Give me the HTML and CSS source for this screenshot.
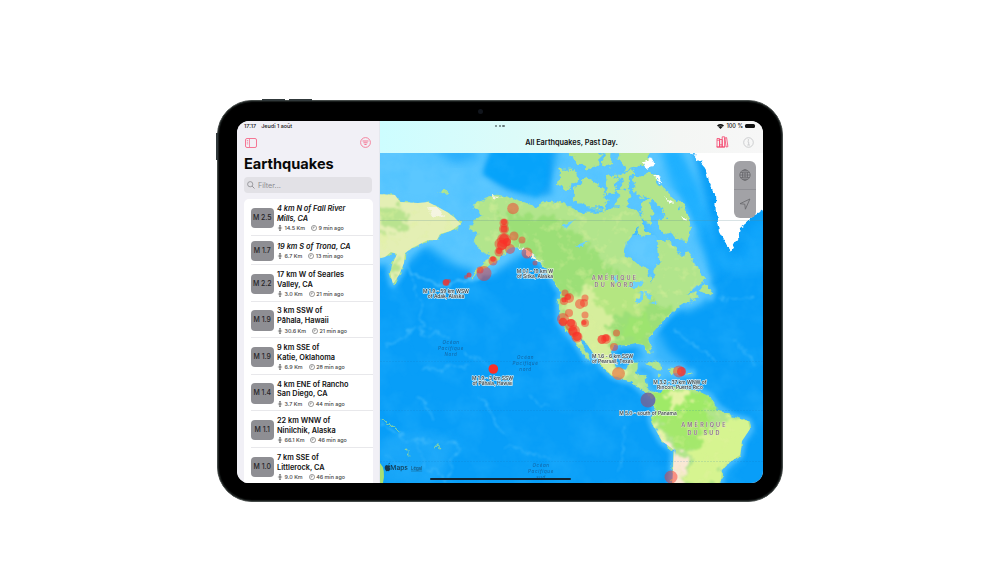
FILE: index.html
```html
<!DOCTYPE html>
<html lang="fr">
<head>
<meta charset="utf-8">
<title>Earthquakes</title>
<link rel="stylesheet" href="styles.css">
</head>
<body>
<svg class="defs" width="0" height="0">
  <symbol id="depth" viewBox="0 0 12 14"><path d="M6 0v14M3.500 2.500L6 .5l2.500 2M3.500 11.500L6 13.500l2.500-2M1 7h10M3.500 5h5M3.500 9h5" fill="none" stroke="currentColor" stroke-width="1.200"/></symbol>
  <symbol id="clock" viewBox="0 0 14 14"><circle cx="7" cy="7" r="6" fill="none" stroke="currentColor" stroke-width="1.200"/><path d="M7 3v4H3.500" fill="none" stroke="currentColor" stroke-width="1.200"/></symbol>
</svg>
<main class="stage">
<div class="device">
  <i class="button b1"></i><i class="button b2"></i><i class="button b3"></i><i class="camera"></i>
  <div class="screen">
    <aside class="sidebar">
      <div class="status"><span>17:17</span><span>Jeudi 1 août</span></div>
      <div class="tools">
        <svg width="12" height="10" viewBox="0 0 12 10"><rect x=".5" y=".5" width="11" height="9" rx="1.500" fill="none" stroke="currentColor"/><path d="M4.500 .5v9M1.800 2.500h1.400M1.800 4.200h1.400M1.800 5.900h1.400" fill="none" stroke="currentColor" stroke-width=".8"/></svg>
        <svg width="11" height="11" viewBox="0 0 11 11"><circle cx="5.500" cy="5.500" r="4.900" fill="none" stroke="currentColor" stroke-width=".9"/><path d="M2.500 4h6M3.400 5.800h4.200M4.400 7.500h2.200" stroke="currentColor" stroke-width="1"/></svg>
      </div>
      <h1>Earthquakes</h1>
      <div class="search"><svg width="8" height="8" viewBox="0 0 8 8"><circle cx="3.200" cy="3.200" r="2.600" fill="none" stroke="currentColor" stroke-width=".8"/><path d="M5.100 5.100L7.500 7.500" stroke="currentColor" stroke-width=".9"/></svg><span>Filter...</span></div>
      <div class="list">
        <div class="row"><b class="mag">M 2.5</b><div class="info"><p class="name recent">4 km N of Fall River<br>Mills, CA</p><p class="meta"><svg><use href="#depth"/></svg><span>14.5 Km</span><svg><use href="#clock"/></svg><span>9 min ago</span></p></div></div>
        <div class="row short"><b class="mag">M 1.7</b><div class="info"><p class="name recent">19 km S of Trona, CA</p><p class="meta"><svg><use href="#depth"/></svg><span>6.7 Km</span><svg><use href="#clock"/></svg><span>13 min ago</span></p></div></div>
        <div class="row"><b class="mag">M 2.2</b><div class="info"><p class="name">17 km W of Searles<br>Valley, CA</p><p class="meta"><svg><use href="#depth"/></svg><span>3.0 Km</span><svg><use href="#clock"/></svg><span>21 min ago</span></p></div></div>
        <div class="row"><b class="mag">M 1.9</b><div class="info"><p class="name">3 km SSW of<br>Pāhala, Hawaii</p><p class="meta"><svg><use href="#depth"/></svg><span>30.6 Km</span><svg><use href="#clock"/></svg><span>21 min ago</span></p></div></div>
        <div class="row"><b class="mag">M 1.9</b><div class="info"><p class="name">9 km SSE of<br>Katie, Oklahoma</p><p class="meta"><svg><use href="#depth"/></svg><span>6.9 Km</span><svg><use href="#clock"/></svg><span>28 min ago</span></p></div></div>
        <div class="row"><b class="mag">M 1.4</b><div class="info"><p class="name">4 km ENE of Rancho<br>San Diego, CA</p><p class="meta"><svg><use href="#depth"/></svg><span>3.7 Km</span><svg><use href="#clock"/></svg><span>44 min ago</span></p></div></div>
        <div class="row"><b class="mag">M 1.1</b><div class="info"><p class="name">22 km WNW of<br>Ninilchik, Alaska</p><p class="meta"><svg><use href="#depth"/></svg><span>66.1 Km</span><svg><use href="#clock"/></svg><span>46 min ago</span></p></div></div>
        <div class="row"><b class="mag">M 1.0</b><div class="info"><p class="name">7 km SSE of<br>Littlerock, CA</p><p class="meta"><svg><use href="#depth"/></svg><span>9.0 Km</span><svg><use href="#clock"/></svg><span>46 min ago</span></p></div></div>
      </div>
    </aside>
    <section class="detail">
      <header class="bar">
        <div class="barstatus">
          <span class="dots"><i></i><i></i><i></i></span>
          <span class="power"><svg width="7" height="5" viewBox="0 0 7 5"><path d="M0 1.500Q3.500-1.300 7 1.500L3.500 5z" fill="#111"/><path d="M1.200 2.700Q3.500 1 5.800 2.700" fill="none" stroke="#eff8f5" stroke-width=".4"/></svg><span>100 %</span><i class="battery"></i></span>
        </div>
        <div class="titlebar"><span class="title">All Earthquakes, Past Day.</span>
          <span class="actions">
            <svg class="books" width="13" height="12" viewBox="0 0 13 12"><path d="M1 2.500h2.600v8.500H1zM3.600 3.500h2.600v7.500H3.600zM6.200 .8h2.400V11H6.200zM8.900 2l1.700-.4 1.300 9.100-1.800.3zM.5 11h8.500M3.600 8.800h2.600M1.200 4.200h2" fill="none" stroke="#f5426c" stroke-width=".8"/></svg>
            <svg width="11" height="11" viewBox="0 0 11 11"><circle cx="5.500" cy="5.500" r="4.800" fill="none" stroke="#c3c4c6" stroke-width=".8"/><path d="M4.500 4.800h1.200v3M4.300 8h2.700" fill="none" stroke="#c3c4c6" stroke-width=".8"/><circle cx="5.400" cy="3" r=".7" fill="#c3c4c6"/></svg>
          </span></div>
      </header>
      <div class="map">
        <svg class="world" viewBox="380 153 383 330">
          <defs>
            <filter id="rough" x="-5%" y="-5%" width="110%" height="110%"><feTurbulence type="fractalNoise" baseFrequency=".15" numOctaves="3" seed="4" result="n"/><feDisplacementMap in="SourceGraphic" in2="n" scale="7" xChannelSelector="R" yChannelSelector="G"/><feGaussianBlur stdDeviation=".4"/></filter>
            <filter id="craggy" x="-5%" y="-5%" width="110%" height="110%" color-interpolation-filters="sRGB"><feTurbulence type="fractalNoise" baseFrequency=".11" numOctaves="4" seed="21" result="n"/><feDisplacementMap in="SourceGraphic" in2="n" scale="13" xChannelSelector="R" yChannelSelector="G"/><feGaussianBlur stdDeviation=".4"/></filter>
            <filter id="patch" x="-10%" y="-10%" width="120%" height="120%" color-interpolation-filters="sRGB"><feTurbulence type="fractalNoise" baseFrequency=".12" numOctaves="3" seed="9" result="n"/><feDisplacementMap in="SourceGraphic" in2="n" scale="24" xChannelSelector="R" yChannelSelector="G"/><feGaussianBlur stdDeviation="1.200"/></filter>
            <filter id="soft" x="-20%" y="-20%" width="140%" height="140%" color-interpolation-filters="sRGB"><feGaussianBlur stdDeviation="4.500"/></filter>
            <filter id="shelf" x="-20%" y="-20%" width="140%" height="140%" color-interpolation-filters="sRGB"><feGaussianBlur stdDeviation="2"/></filter>
            <filter id="ridge" x="-20%" y="-20%" width="140%" height="140%" color-interpolation-filters="sRGB"><feTurbulence type="fractalNoise" baseFrequency=".09" numOctaves="3" seed="2" result="n"/><feDisplacementMap in="SourceGraphic" in2="n" scale="14" xChannelSelector="R" yChannelSelector="G"/><feGaussianBlur stdDeviation=".8"/></filter>
            <filter id="grain" x="0" y="0" width="100%" height="100%" color-interpolation-filters="sRGB"><feTurbulence type="fractalNoise" baseFrequency=".035" numOctaves="4" seed="6"/><feColorMatrix values="0 0 0 0 .2  0 0 0 0 .72  0 0 0 0 1  2 0 0 0 -.8"/></filter>
            <filter id="scrub" x="0" y="0" width="100%" height="100%" color-interpolation-filters="sRGB"><feTurbulence type="fractalNoise" baseFrequency=".09" numOctaves="3" seed="15"/><feColorMatrix values="0 0 0 0 .88  0 0 0 0 .95  0 0 0 0 .62  4 0 0 0 -2.200"/></filter>
            <path id="asia" d="M374 194L395 195 400 202 418 203 428 202 438 207 447 212 455 218 461 224 455 228 450 231 440 234 437 240 428 240 420 244 412 248 405 253 404 263 399 275 393 284 390 273 393 263 397 254 391 252 385 257 374 260Z"/>
            <path id="na" d="M496 194L510 197 522 203 536 207 550 201 565 205 580 213 598 213 612 210 625 205 638 212 642 222 635 232 627 242 623 255 635 262 647 270 652 283 655 272 660 263 659 253 658 241 667 241 676 249 682 257 687 251 693 260 699 271 706 279 698 286 691 291 685 297 696 291 698 297 685 303 676 308 668 315 662 322 655 330 648 338 651 348 652 353 648 354 644 345 636 343 627 345 614 345 611 352 613 362 618 369 625 370 630 364 638 364 635 374 645 377 647 388 654 393 664 393 660 399 651 397 642 390 633 382 622 379 612 375 603 367 599 360 591 350 583 339 580 338 584 349 590 359 587 359 580 348 573 338 566 330 560 321 559 300 562 293 557 286 551 276 543 265 534 254 525 248 515 247 507 251 500 259 489 265 471 278 484 264 490 255 480 251 474 241 480 234 470 228 477 218 484 215 477 211 473 205 480 202Z"/>
            <path id="sa" d="M654 404L658 396 665 388 675 387 690 390 702 393 709 396 718 408 732 417 748 421 750 429 742 441 740 455 730 462 722 470 720 489 672 489 674 450 662 441 654 427 651 418 656 410Z"/>
            <path id="isles" d="M560 170l15 0 3 8-10 12-11-4zM575 187l13-10 12 8 8 15-5 8-15 0-15-7zM564 148l35 0 0 17-10 3-14-6zM602 148h11l-2 17-6 2zM616 148h36l-7 19-20 4zM604 178l15-3-5 17-7 2zM620 173l14-1-6 13-6 2zM616 190l11-2 3 18-12 0zM640 206l10-8 3 24-11-2zM634 178l17-5 13 17 13 10 9 15 5 15-5 11-13-7-14-4-2-9 10-4-4-10-14-8-14-5zM639 225l12 7-7 4-7-3z"/>
            <path id="islets" d="M700 291l5-7 7 7-1 6zM645 362q9-3 20 7l-8 0-12-6zM670 368l11 1 2 4-12 0zM657 374l5 1-4 1zM687 373h5v1h-5zM440 192l6-1 2 2-7 1z"/>
            <g id="land"><use href="#asia"/><use href="#na"/><use href="#sa"/><use href="#islets"/></g>
            <path id="ice" d="M688 147L698 160 705 168 709 182 715 195 716 215 719 232 724 241 731 251 738 238 740 228 750 220 756 214 771 207 771 147Z"/>
            <clipPath id="shore"><use href="#asia"/><use href="#na"/><use href="#sa"/></clipPath>
          </defs>
          <rect x="375" y="148" width="393" height="340" fill="#089ef8"/>
          <g filter="url(#soft)" fill="#5bc7ff">
            <path d="M370 140H495L484 172 510 192 550 196 558 140H692L704 200 712 240 712 275 706 302 685 312 660 260 640 215 570 225 490 275 455 265 425 245 400 270 370 262Z"/>
            <path d="M645 325l13 6 10 20 20 15-10 20-25 0-20-25z" opacity=".6"/>
          </g>
          <path d="M706 205l8 32 14 18 12 3 10-30 20-14v56h-38l-20 4-14-36-3-25z" fill="#10a5fb" filter="url(#soft)"/>
          <path d="M660 148h20l22 45 4 35-15-5-20-40z" fill="#1eb0ff" filter="url(#soft)"/>
          <path d="M430 147h40l10 10-25 7z" fill="#29adfb" filter="url(#soft)"/>
          <path d="M496 140H549L547 182 537 197 517 190 499 183 483 174Z" fill="#06a3fa" filter="url(#shelf)"/>
          <path d="M620 235h35l10 15-8 18-3 15-8-10-26-12z" fill="#62caff"/>
          <rect x="375" y="148" width="393" height="340" filter="url(#grain)" opacity=".36"/>
          <g filter="url(#ridge)" fill="none" stroke="#48bdfc" stroke-width="1.200" opacity=".9">
            <path d="M408 269Q426 286 449 284T494 270" stroke-width="3"/><path d="M412 280Q424 298 421 333L450 336M462 354Q478 356 492 369M385 345l30-15M422 370l46-5M420 395l15 25M480 398l25 35M505 445l45 15M380 422l30 18 20-2M415 440l45 4-15 36-20-18zM385 455l25 15M530 395l20 15M625 425l-5 50M675 330l40 30M720 300l35-5M735 340l20 25"/>
          </g>
          <path d="M412 434l44 4-12 42-60 5-4-45z" fill="#36b4fa" opacity=".35" filter="url(#soft)"/>
          <g stroke="#59c5ff" stroke-width="8" stroke-linejoin="round" fill="#59c5ff" filter="url(#shelf)" opacity=".75"><use href="#land"/><use href="#isles"/></g>
          <g fill="#b2e58c" stroke="#b2e58c" stroke-width=".7"><use href="#land" filter="url(#rough)"/><use href="#isles" filter="url(#craggy)"/></g>
          <use href="#ice" fill="#fff" filter="url(#rough)"/>
          <g clip-path="url(#shore)">
            <g filter="url(#patch)">
              <path d="M370 185h95v45l-62 60-25-5z" fill="#e4efb4"/>
              <path d="M380 208l22 0 10 12-15 12-17 2zM392 262l8-8 0 15-7 10z" fill="#b9e38f"/>
              <path d="M500 215l50 0 40 30 20 25 20 10 20 20 20 10-15 30-15 20-50-5-25-20-5-35-25-45-20-5z" fill="#9cdf77"/>
              <path d="M563 300l25-12 27 12-5 22 3 25 3 30-16-4-30-43z" fill="#d6ee9c"/>
              <path d="M585 277l45 5 23 12-10 20-38 0z" fill="#b4e681"/>
              <path d="M620 325l25-8 10 10-15 15-20 0z" fill="#9de46f"/>
              <path d="M655 383l50 10 13 14-20 18-30 5-18-20z" fill="#9fea67"/>
              <path d="M660 418l48 0 10 20-20 15-28-12z" fill="#a4e86c"/>
              <path d="M704 438l18-18 35-5-10 45-24 7-2 19-34-5 3-20z" fill="#d6f490"/>
              <path d="M650 432l10 5 17 15 7 0 2 38-17 0-2-30z" fill="#fae8d5"/>
              <path d="M665 393l22-3 5 10-20 8zM651 412l8 12 8 20-16-10z" fill="#e5f4a5"/>
              <path d="M607 365l10 5 15 5-10 4-15-5z" fill="#e5f4a5"/>
            </g>
            <rect x="375" y="190" width="393" height="295" filter="url(#scrub)" opacity=".4"/>
          </g>
          <g fill="#f5f5e1" filter="url(#rough)"><path d="M428 207l12 2 4 8-12-2zM491 195l10 1-7 3zM518 246l10 4 14 13-9-5z"/><path d="M643 162l9-4 2 8-8 2zM653 176l6 0 4 8zM664 188l5 8zM664 197l8 4-2 2zM681 215l6 4-2 2z" fill="#fff"/></g>
          <g fill="#6bd1fb" filter="url(#rough)"><path d="M562 225l12-5-8 9zM575 246l14-6-10 8zM612 277l6-2-2 8z"/><path d="M629 287q5-8 14-4l-4 4zM637 303l3-11 4 0-3 12zM645 292l7 1-3 9zM649 304l10-3-5 4z"/></g>
          <path d="M380 220.500H763" stroke="#5f8c92" stroke-width=".6" opacity=".4"/><path d="M380 361.500H763M380 410.500H763M380 461.500H763" stroke="#176fb1" stroke-width=".6" stroke-dasharray="2 1" opacity=".25"/>
          <path d="M380 463q6 6 3 20h-3z" fill="#a9df73"/><path d="M381 419l10 6 9 7M405 449l7 7M434 448l4-2 3 2" fill="none" stroke="#a2de91" stroke-width="1.200" opacity=".8" filter="url(#rough)"/>

          <g class="region"><text x="615" y="279.700">AMÉRIQUE</text><text x="615" y="287.200">DU NORD</text><text x="704.500" y="427">AMÉRIQUE</text><text x="704.500" y="434.500">DU SUD</text></g>
          <g class="ocean"><text x="451" y="344">Océan</text><text x="451" y="350">Pacifique</text><text x="451" y="356">Nord</text><text x="525.500" y="359">Océan</text><text x="525.500" y="365">Pacifique</text><text x="525.500" y="371">nord</text><text x="541" y="467">Océan</text><text x="541" y="473">Pacifique</text><text x="541" y="479">sud</text></g>
          <g class="quakes">
            <g class="faint"><circle cx="513" cy="208.500" r="5.800"/><circle cx="504" cy="223" r="4.500"/><circle cx="504" cy="229" r="5"/><circle cx="514" cy="236" r="4.500"/><circle cx="522" cy="240" r="3.500"/><circle cx="504" cy="240" r="7"/><circle cx="501" cy="244" r="6.500"/><circle cx="510" cy="249" r="5"/><circle cx="527" cy="253" r="5.500"/><circle cx="499" cy="252" r="4.500"/><circle cx="493" cy="261" r="4.500"/><circle cx="484" cy="273.500" r="7.500"/><circle cx="480" cy="270" r="3.500"/><circle cx="535" cy="263" r="2.500"/><circle cx="446" cy="282.500" r="3.500"/><circle cx="449" cy="281" r="2"/><circle cx="466" cy="277" r="2"/>
            <circle cx="565" cy="293" r="3.500"/><circle cx="569" cy="298" r="5"/><circle cx="564" cy="301" r="4"/><circle cx="580" cy="304" r="5"/><circle cx="585" cy="298" r="3.500"/><circle cx="584" cy="303" r="4"/><circle cx="585" cy="315" r="3.500"/><circle cx="569" cy="313" r="4"/><circle cx="563" cy="319" r="6"/><circle cx="571" cy="325" r="6"/><circle cx="574" cy="331" r="6"/><circle cx="577" cy="337" r="5.500"/><circle cx="585" cy="323" r="4"/><circle cx="616.500" cy="333" r="3.500"/><circle cx="606" cy="339" r="5"/><circle cx="614" cy="347" r="4"/><circle cx="679" cy="371.500" r="6"/><circle cx="671" cy="477" r="6.500"/></g>
            <g class="strong"><circle cx="504" cy="222" r="3"/><circle cx="504" cy="229" r="3.500"/><circle cx="504" cy="239" r="5"/><circle cx="502" cy="245" r="5"/><circle cx="507" cy="242" r="4"/><circle cx="499" cy="251" r="3"/><circle cx="493" cy="259" r="2.800"/><circle cx="469" cy="275" r="2.500"/><circle cx="446" cy="282.500" r="3"/><circle cx="564" cy="300" r="2.500"/><circle cx="568" cy="297" r="3"/><circle cx="563" cy="322" r="4.200"/><circle cx="571" cy="323" r="4"/><circle cx="573" cy="331" r="4.500"/><circle cx="577" cy="336.500" r="4.500"/><circle cx="584" cy="322.500" r="2.500"/><circle cx="602" cy="339.500" r="4.500"/><circle cx="606" cy="338" r="3.500"/><circle cx="681.500" cy="371.500" r="4.500"/></g>
            <circle cx="493.300" cy="369" r="4.800"/>
            <circle cx="618.500" cy="373.500" r="6.500" fill="#e57b45" opacity=".7"/><circle cx="648" cy="400" r="7.500" fill="#70659a" opacity=".85"/>
          </g>
          <g class="labels"><text x="446" y="293">M 1.9 - 59 km WSW</text><text x="446" y="298">of Adak, Alaska</text><text x="535" y="272.500">M 0.1 - 19 km W</text><text x="535" y="277.500">of Sitka, Alaska</text><text x="492.500" y="380">M 1.9 - 3 km SSW</text><text x="492.500" y="385">of Pāhala, Hawaii</text><text x="612.500" y="358">M 1.6 - 6 km SSW</text><text x="612.500" y="363">of Pearsall, Texas</text><text x="680" y="384">M 3.2 - 37 km WNW of</text><text x="680" y="389">Rincón, Puerto Rico</text><text x="648" y="415">M 5.0 - south of Panama</text></g>
          <path d="M388 464.500q1-1.500 2-1.800-.2 1.500-2 1.800M385.500 465.500q1.300-.8 2.300 0 1.700-.6 2.500.5-1.500 1.500.2 3-1 2.700-2.700 2-1 0-1.600.2-1.800-2-1.500-4.300z" fill="#153a50"/><text class="brand" x="390.300" y="470">Maps</text><text class="legal" x="411" y="469.800">Légal</text>
        </svg>
        <div class="controls"><span><svg width="12" height="12" viewBox="0 0 12 12"><circle cx="6" cy="6" r="5.200"/><ellipse cx="6" cy="6" rx="2.500" ry="5.200"/><path d="M.8 6h10.400M6 .8v10.400M1.700 3.300q4.300 1.500 8.600 0M1.700 8.700q4.300-1.500 8.600 0"/></svg></span><span><svg width="12" height="12" viewBox="0 0 12 12"><path d="M10.900 1L1 5.700 5.800 6.200 6.400 11.200Z" stroke-linejoin="round"/></svg></span></div>
      </div>
    </section>
    <i class="home"></i>
  </div>
</div>
</main>
</body>
</html>
```
FILE: styles.css
```css
* { box-sizing: border-box; }
body { margin: 0; background: #fff; font-family: Inter, "Liberation Sans", sans-serif; color: #111; overflow: hidden; }
.defs { position: absolute; }
.stage { display: flex; justify-content: center; align-items: flex-start; height: 563px; padding-top: 100px; }
.device { position: relative; width: 566px; height: 402px; padding: 20px 19px 18px; border-radius: 35px; background: #000; border: 1px solid #454b49; box-shadow: inset 0 0 1px 1px #1c2120; }
.button { position: absolute; background: #30383a; }
.b1 { left: 44px; top: -2px; width: 23px; height: 2px; }
.b2 { left: 71px; top: -2px; width: 23px; height: 2px; }
.b3 { left: -2px; top: 32px; width: 2px; height: 27px; }
.camera { position: absolute; left: 260px; top: 8px; width: 5px; height: 5px; border-radius: 50%; background: #11151c; }
.screen { position: relative; display: flex; width: 526px; height: 362px; overflow: hidden; border-radius: 12px; background: #f1f0f6; }
.sidebar { width: 143px; flex: none; padding: 0 8px 0 7px; background: #f1f0f6; border-right: 1px solid #e5e8ee; }
.status { display: flex; gap: 5px; height: 14px; padding-top: 1.500px; font-size: 5.450px; line-height: 7px; font-weight: 500; }
.tools { display: flex; justify-content: space-between; align-items: center; height: 15px; padding: 0 0 0 1px; color: #f57694; }
h1 { margin: 5px 0 0; height: 22px; font-size: 14.600px; line-height: 18px; letter-spacing: 0; font-weight: 700; color: #080808; }
.search { display: flex; align-items: center; gap: 3px; width: 128px; height: 16px; padding-left: 3px; border-radius: 4px; background: #e2e1e6; font-size: 7.200px; color: #8c8b91; }
.list { margin-top: 6px; width: 129px; height: 290px; padding-left: 7px; border-radius: 5px 5px 0 0; background: #fff; }
.row { display: flex; align-items: center; gap: 3.500px; height: 36.550px; padding-top: 2px; border-bottom: 1px solid #e8e8eb; }
.row.short { height: 29.600px; }
.row:last-child { border-bottom: 0; }
.mag { width: 22.500px; height: 20.500px; flex: none; border-radius: 4px; background: #8e8e93; color: #242427; font-size: 6.900px; line-height: 20.500px; text-align: center; font-weight: 500; }
.info { flex: 1; min-width: 0; }
p { margin: 0; white-space: nowrap; }
.name { font-size: 7.350px; line-height: 9.800px; font-weight: 600; color: #111; }
.recent { font-style: italic; }
.meta { display: flex; align-items: center; height: 8px; margin-top: .5px; font-size: 5.400px; line-height: 8px; font-weight: 500; color: #444; }
.meta svg { width: 6px; height: 6px; margin-right: 1.500px; }
.meta span { margin-right: 6px; }
.detail { flex: 1; min-width: 0; display: flex; flex-direction: column; }
.bar { height: 32px; background: linear-gradient(90deg, #cdfdff, #dcfbf9 35%, #e7faf5 55%, #f4f6f4 78%, #f7f7f7); }
.barstatus { position: relative; display: flex; justify-content: flex-end; height: 13px; padding: 1px 8px 0 0; }
.dots { position: absolute; left: 115px; top: 4px; display: flex; gap: 1.500px; }
.dots i { width: 2.200px; height: 2.200px; border-radius: 50%; background: #657778; }
.power { display: flex; align-items: center; height: 8px; gap: 2px; font-size: 5.600px; font-weight: 500; }
.battery { width: 10px; height: 4px; border-radius: 1.500px; background: #111; }
.titlebar { position: relative; display: flex; justify-content: center; align-items: center; height: 17px; }
.title { font-size: 7.350px; font-weight: 600; }
.actions { position: absolute; right: 9px; top: 2px; display: flex; align-items: center; gap: 14px; }
.map { position: relative; height: 330px; }
.world { display: block; width: 383px; height: 330px; }
.controls { position: absolute; right: 7px; top: 7.500px; width: 22px; height: 57px; border-radius: 6px; background: #a2a2a6; }
.controls span { display: flex; align-items: center; justify-content: center; height: 28.500px; }
.controls span + span { border-top: 1px solid #909095; }
.controls svg { fill: none; stroke: #66666a; stroke-width: .8; }
.home { position: absolute; left: 193px; bottom: 3px; width: 141px; height: 2.500px; border-radius: 2px; background: #102433; }
.quakes { fill: #fa3028; }
.faint { fill-opacity: .48; }
.strong { fill-opacity: .7; }
.labels text { font: 500 4.900px Inter, sans-serif; text-anchor: middle; fill: #333c42; stroke: #f3f4ef; stroke-width: 1.300px; stroke-opacity: .85; stroke-linejoin: round; paint-order: stroke; }
.region text { font: 600 5.500px Inter, sans-serif; letter-spacing: 2.200px; text-anchor: middle; fill: #8d718a; stroke: #e1ecc5; stroke-width: .6px; paint-order: stroke; }
.ocean text { font: italic 500 4.500px Inter, sans-serif; letter-spacing: .6px; text-anchor: middle; fill: #126bac; }
.brand { font: 500 6.700px Inter, sans-serif; fill: #153a50; }
.legal { font: 500 4.300px Inter, sans-serif; fill: #174f70; text-decoration: underline; }
```
